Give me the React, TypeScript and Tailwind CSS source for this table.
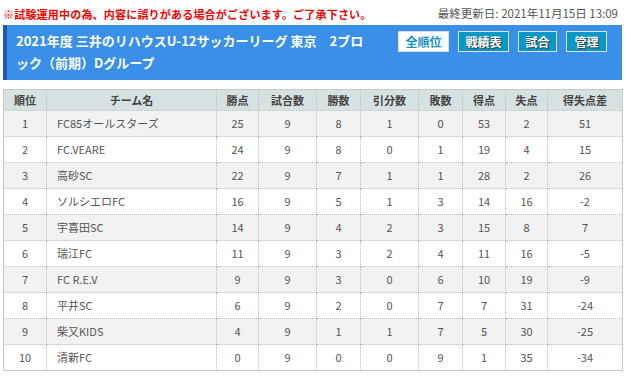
import React from "react";

const rows: [string, string, string, string, string, string, string, string, string, string][] = [
  ["1", "FC85オールスターズ", "25", "9", "8", "1", "0", "53", "2", "51"],
  ["2", "FC.VEARE", "24", "9", "8", "0", "1", "19", "4", "15"],
  ["3", "高砂SC", "22", "9", "7", "1", "1", "28", "2", "26"],
  ["4", "ソルシエロFC", "16", "9", "5", "1", "3", "14", "16", "-2"],
  ["5", "宇喜田SC", "14", "9", "4", "2", "3", "15", "8", "7"],
  ["6", "瑞江FC", "11", "9", "3", "2", "4", "11", "16", "-5"],
  ["7", "FC R.E.V", "9", "9", "3", "0", "6", "10", "19", "-9"],
  ["8", "平井SC", "6", "9", "2", "0", "7", "7", "31", "-24"],
  ["9", "柴又KIDS", "4", "9", "1", "1", "7", "5", "30", "-25"],
  ["10", "清新FC", "0", "9", "0", "0", "9", "1", "35", "-34"],
];

const heads = ["順位", "チーム名", "勝点", "試合数", "勝数", "引分数", "敗数", "得点", "失点", "得失点差"];
const widths = ["w-[43px]", "w-[170px]", "w-[42px]", "w-[58px]", "w-[44px]", "w-[58px]", "w-[44px]", "w-[43px]", "w-[42px]", "w-[75px]"];

export default function App() {
  return (
    <div className="w-[631px] h-[381px] bg-white overflow-hidden font-['Noto_Sans_CJK_JP',sans-serif] pl-[3px] pr-[9px]">
      <div className="h-[25px] flex items-center justify-between pt-[3px]">
        <span className="text-[11px] font-bold text-[#f00000] tracking-[0.2px]">※試験運用中の為、内容に誤りがある場合がございます。ご了承下さい。</span>
        <span className="text-[11.5px] text-[#555] mr-[4px]">最終更新日: 2021年11月15日 13:09</span>
      </div>
      <div className="h-[55px] bg-[#3a8fe8] border-l-[4px] border-[#1b5ea8] flex items-start">
        <div className="flex-1 pl-[9px] pr-[24px] pt-[5px] text-white font-bold text-[13px] leading-[22px]">
          2021年度 三井のリハウスU-12サッカーリーグ 東京　2ブロック（前期）Dグループ
        </div>
        <div className="flex gap-[9px] pt-[6px] pr-[15px] shrink-0">
          <div className="w-[51px] h-[21px] bg-white border border-[#ddd] text-[#1a8fc8] text-[12px] font-bold flex items-center justify-center">全順位</div>
          <div className="w-[51px] h-[21px] bg-[#0a98c8] border border-[#e0e0e0] text-white text-[12px] font-bold flex items-center justify-center [text-shadow:1px_1px_1px_#333]">戦績表</div>
          <div className="w-[39px] h-[21px] bg-[#0a98c8] border border-[#e0e0e0] text-white text-[12px] font-bold flex items-center justify-center [text-shadow:1px_1px_1px_#333]">試合</div>
          <div className="w-[41px] h-[21px] bg-[#0a98c8] border border-[#e0e0e0] text-white text-[12px] font-bold flex items-center justify-center [text-shadow:1px_1px_1px_#333]">管理</div>
        </div>
      </div>
      <table className="mt-[9px] w-[619px] table-fixed border-collapse border border-[#c8c8c8] text-[11px]">
        <colgroup>
          {widths.map((w, i) => (
            <col key={i} className={w} />
          ))}
        </colgroup>
        <thead>
          <tr className="h-[21px] bg-[#d6e1e1]">
            {heads.map((h, i) => (
              <th key={i} className="font-bold text-[#444] border-x border-dotted border-[#bdbdbd] border-b border-b-[#c8c8c8] p-0 text-center">
                {h}
              </th>
            ))}
          </tr>
        </thead>
        <tbody>
          {rows.map((r, ri) => (
            <tr key={ri} className={`h-[26px] ${ri % 2 === 0 ? "bg-[#f2f2f2]" : "bg-white"}`}>
              {r.map((c, ci) => (
                <td
                  key={ci}
                  className={`border border-dotted border-[#bdbdbd] p-0 text-[#555] ${ci === 1 ? "text-left pl-[10px]" : "text-center"}`}
                >
                  {c}
                </td>
              ))}
            </tr>
          ))}
        </tbody>
      </table>
    </div>
  );
}
